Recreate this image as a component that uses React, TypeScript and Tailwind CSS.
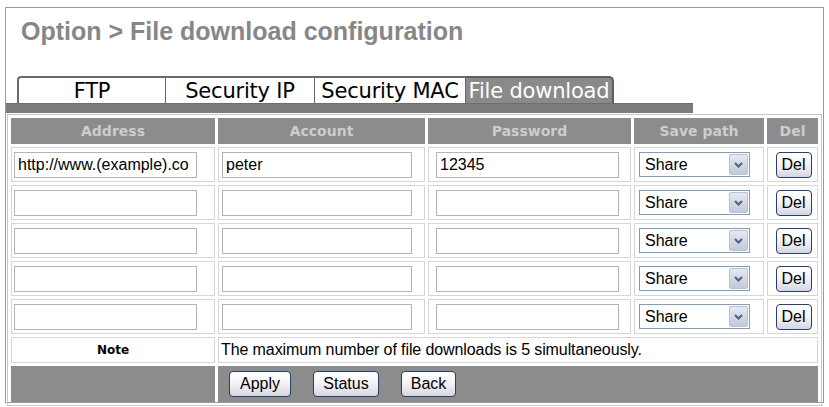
import React from "react";

const rows = [
  { address: "http://www.(example).co", account: "peter", password: "12345" },
  { address: "", account: "", password: "" },
  { address: "", account: "", password: "" },
  { address: "", account: "", password: "" },
  { address: "", account: "", password: "" },
];

const tabs = ["FTP", "Security IP", "Security MAC"];

function XpButton({ label, className = "" }: { label: string; className?: string }) {
  return (
    <button
      className={`h-[26px] rounded-[4px] border border-[#24406e] bg-gradient-to-b from-white via-[#f2f2f5] to-[#d6d6e0] text-[16px] leading-none text-black ${className}`}
    >
      {label}
    </button>
  );
}

function SaveSelect() {
  return (
    <div className="ml-[4px] flex h-[25px] w-[111px] items-center border border-[#7f9db9] bg-white">
      <span className="flex-1 pl-[5px] text-[16px] leading-none text-black">Share</span>
      <span className="mr-[1px] flex h-[21px] w-[19px] items-center justify-center rounded-[2px] border border-[#b6c2dc] bg-gradient-to-b from-[#e6e9f3] to-[#c3c9d9]">
        <svg width="9" height="6" viewBox="0 0 9 6">
          <path d="M1 1 L4.5 4.5 L8 1" fill="none" stroke="#4d6185" strokeWidth="2" />
        </svg>
      </span>
    </div>
  );
}

function TextBox({ value, className }: { value: string; className: string }) {
  return (
    <input
      readOnly
      value={value}
      className={`block h-[26px] border border-[#b4b4b4] bg-white pl-[3px] text-[16px] text-black outline-none ${className}`}
    />
  );
}

export default function App() {
  return (
    <div
      className="h-[407px] w-[829px] overflow-hidden bg-white pt-[7px] pl-[5px]"
      style={{ fontFamily: '"Liberation Sans", Arial, sans-serif' }}
    >
      <div className="h-[396px] w-[819px] border border-[#9a9a9a]">
        {/* Title */}
        <h1 className="pl-[15px] pt-[9px] text-[25px] font-bold leading-[28px] text-[#878787]">
          Option &gt; File download configuration
        </h1>

        {/* Tabs */}
        <div
          className="mt-[31px] flex h-[27px] pl-[11px]"
          style={{ fontFamily: '"DejaVu Sans", Verdana, sans-serif' }}
        >
          {tabs.map((t, i) => (
            <div
              key={t}
              className={`flex h-full items-center justify-center border-t-2 border-r border-[#6a6a6a] bg-white pt-[1px] text-[21px] leading-none tracking-[-0.2px] text-black ${
                i === 0 ? "rounded-tl-[4px] border-l-2" : ""
              } ${i === 2 ? "w-[151px]" : "w-[149px]"}`}
            >
              {t}
            </div>
          ))}
          <div className="flex h-full w-[148px] items-center justify-center rounded-tr-[5px] border-t-2 border-r-2 border-[#5e5e5e] bg-[#8a8a8a] pt-[1px] text-[21px] leading-none tracking-[-0.2px] text-white">
            File download
          </div>
        </div>
        <div className="h-[10px] w-[687px] border-t border-[#6e6e6e] bg-[#7c7c7c]" />

        {/* Table */}
        <table className="ml-[1px] mt-[1px] border-separate border-spacing-x-[3px] border-spacing-y-[3px] border border-[#c8c8c8]">
          <thead>
            <tr
              className="h-[26px] text-[14px] font-bold text-[#cdcdcd]"
              style={{ fontFamily: '"DejaVu Sans", Verdana, sans-serif' }}
            >
              <th className="w-[204px] bg-[#8c8c8c] p-0">Address</th>
              <th className="w-[207px] bg-[#8c8c8c] p-0">Account</th>
              <th className="w-[203px] bg-[#8c8c8c] p-0">Password</th>
              <th className="w-[130px] bg-[#8c8c8c] p-0">Save path</th>
              <th className="w-[51px] bg-[#8c8c8c] p-0">Del</th>
            </tr>
          </thead>
          <tbody>
            {rows.map((r, i) => (
              <tr key={i} className="h-[35px]">
                <td className="border border-[#d6d6d6] p-0">
                  <TextBox value={r.address} className="ml-[2px] w-[183px]" />
                </td>
                <td className="border border-[#d6d6d6] p-0">
                  <TextBox value={r.account} className="ml-[3px] w-[190px]" />
                </td>
                <td className="border border-[#d6d6d6] p-0">
                  <TextBox value={r.password} className="ml-[7px] w-[183px]" />
                </td>
                <td className="border border-[#d6d6d6] p-0">
                  <SaveSelect />
                </td>
                <td className="border border-[#d6d6d6] p-0 text-center">
                  <XpButton label="Del" className="ml-[2px] w-[36px]" />
                </td>
              </tr>
            ))}
            <tr className="h-[24px]">
              <td
                className="border border-[#d6d6d6] p-0 text-center text-[12px] font-bold text-black"
                style={{ fontFamily: '"DejaVu Sans", Verdana, sans-serif' }}
              >
                Note
              </td>
              <td colSpan={4} className="border border-[#d6d6d6] p-0 pl-[2px] text-[16px] tracking-[-0.1px] text-black">
                The maximum number of file downloads is 5 simultaneously.
              </td>
            </tr>
            <tr className="h-[36px]">
              <td className="bg-[#8c8c8c] p-0" />
              <td colSpan={4} className="bg-[#8c8c8c] p-0 pl-[11px]">
                <div className="flex items-center gap-[22px]">
                  <XpButton label="Apply" className="w-[62px]" />
                  <XpButton label="Status" className="w-[66px]" />
                  <XpButton label="Back" className="w-[55px]" />
                </div>
              </td>
            </tr>
          </tbody>
        </table>
      </div>
    </div>
  );
}
